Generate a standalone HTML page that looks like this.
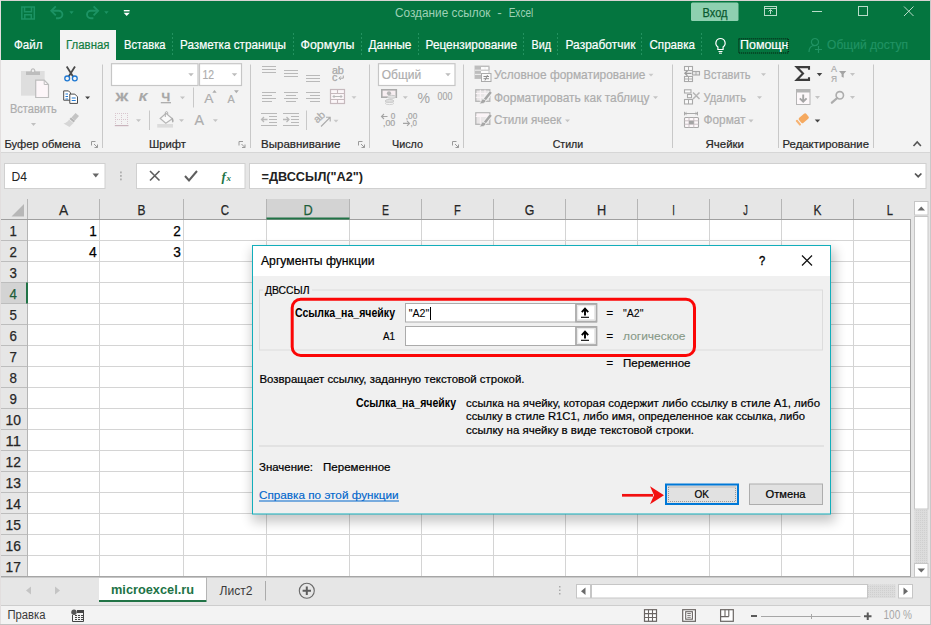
<!DOCTYPE html>
<html lang="ru"><head><meta charset="utf-8"><title>Создание ссылок - Excel</title>
<style>
html,body{margin:0;padding:0;background:#e6e6e6;overflow:hidden}
svg{display:block;font-family:'Liberation Sans', 'DejaVu Sans', sans-serif;}
text{white-space:pre}
</style></head><body>
<svg width="931" height="625" viewBox="0 0 931 625">
<defs><pattern id="hatch" width="2" height="2" patternUnits="userSpaceOnUse"><rect width="2" height="2" fill="#dcdcdc"/><rect width="1" height="1" fill="#cfcfcf"/></pattern><filter id="sh" x="-5%" y="-5%" width="110%" height="115%"><feGaussianBlur stdDeviation="6"/></filter></defs>
<rect x="0" y="0" width="931" height="625" fill="#e6e6e6" />
<rect x="0" y="0" width="931" height="60" fill="#04753f" />
<rect x="0" y="60" width="931" height="92" fill="#f3f3f3" />
<line x1="0" y1="152.5" x2="931" y2="152.5" stroke="#d6d6d6" stroke-width="1" />
<text x="395" y="17" font-size="12" fill="#9ed1b6" textLength="95.5" lengthAdjust="spacingAndGlyphs" >Создание ссылок</text>
<text x="497.3" y="17" font-size="12" fill="#9ed1b6" textLength="4.5" lengthAdjust="spacingAndGlyphs" >-</text>
<text x="508.7" y="17" font-size="12" fill="#9ed1b6" textLength="24.5" lengthAdjust="spacingAndGlyphs" >Excel</text>
<path d="M21.800 7h12.500v12h-12.500z M24.500 7v4.800h7v-4.800 M24.800 19v-4.200h6.500v4.200" fill="none" stroke="#1c9364" stroke-width="1.5" />
<path d="M52 10.800h6.700a3.700 3.700 0 0 1 0 7.400h-2.700" fill="none" stroke="#1c9364" stroke-width="1.9" />
<path d="M55.800 6.300l-4.500 4.500 4.500 4.500" fill="none" stroke="#1c9364" stroke-width="1.9" />
<path d="M69.300 11.200h4.400l-2.200 2.800z" fill="#1c9364" />
<path d="M97.400 10.800h-6.700a3.700 3.700 0 0 0 0 7.400h2.700" fill="none" stroke="#1c9364" stroke-width="1.9" />
<path d="M93.600 6.300l4.500 4.500-4.500 4.500" fill="none" stroke="#1c9364" stroke-width="1.9" />
<path d="M104.200 11.200h4.400l-2.200 2.800z" fill="#1c9364" />
<rect x="123.8" y="10" width="5.8" height="1.4" fill="#fff" />
<path d="M123.600 12.800h6.200l-3.100 3.300z" fill="#fff" />
<rect x="691" y="2.5" width="47.5" height="18.5" fill="#8ed0b0" rx="1.5" />
<text x="702.5" y="16.6" font-size="12" fill="#0a5a30" textLength="25" lengthAdjust="spacingAndGlyphs" stroke="#0a5a30" stroke-width="0.25" >Вход</text>
<rect x="764.5" y="6.5" width="12" height="9" fill="none" stroke="#b9dcc9" stroke-width="1" />
<line x1="764" y1="8.5" x2="777" y2="8.5" stroke="#b9dcc9" stroke-width="1" />
<path d="M770.5 14v-4 M768.5 11.5l2-2 2 2" fill="none" stroke="#b9dcc9" stroke-width="1" />
<line x1="812" y1="11.5" x2="822" y2="11.5" stroke="#b9dcc9" stroke-width="1" />
<rect x="858.5" y="6.5" width="9" height="9" fill="none" stroke="#b9dcc9" stroke-width="1" />
<path d="M904 6.5l9.500 9.500 M913.5 6.5l-9.500 9.500" fill="none" stroke="#b9dcc9" stroke-width="1" />
<rect x="60" y="30" width="56" height="30" fill="#f3f3f3" />
<text x="14" y="49" font-size="12.5" fill="#fff" textLength="28.5" lengthAdjust="spacingAndGlyphs" stroke="#fff" stroke-width="0.2" >Файл</text>
<text x="66" y="49" font-size="12.5" fill="#107c41" textLength="43.5" lengthAdjust="spacingAndGlyphs" stroke="#107c41" stroke-width="0.2" >Главная</text>
<text x="124" y="49" font-size="12.5" fill="#fff" textLength="41.5" lengthAdjust="spacingAndGlyphs" stroke="#fff" stroke-width="0.2" >Вставка</text>
<text x="180" y="49" font-size="12.5" fill="#fff" textLength="106" lengthAdjust="spacingAndGlyphs" stroke="#fff" stroke-width="0.2" >Разметка страницы</text>
<text x="300.5" y="49" font-size="12.5" fill="#fff" textLength="54" lengthAdjust="spacingAndGlyphs" stroke="#fff" stroke-width="0.2" >Формулы</text>
<text x="368.5" y="49" font-size="12.5" fill="#fff" textLength="43" lengthAdjust="spacingAndGlyphs" stroke="#fff" stroke-width="0.2" >Данные</text>
<text x="425.5" y="49" font-size="12.5" fill="#fff" textLength="91.5" lengthAdjust="spacingAndGlyphs" stroke="#fff" stroke-width="0.2" >Рецензирование</text>
<text x="531.5" y="49" font-size="12.5" fill="#fff" textLength="19.5" lengthAdjust="spacingAndGlyphs" stroke="#fff" stroke-width="0.2" >Вид</text>
<text x="565.5" y="49" font-size="12.5" fill="#fff" textLength="70" lengthAdjust="spacingAndGlyphs" stroke="#fff" stroke-width="0.2" >Разработчик</text>
<text x="649.5" y="49" font-size="12.5" fill="#fff" textLength="45.5" lengthAdjust="spacingAndGlyphs" stroke="#fff" stroke-width="0.2" >Справка</text>
<text x="740" y="49" font-size="12.5" fill="#fff" textLength="48.5" lengthAdjust="spacingAndGlyphs" stroke="#fff" stroke-width="0.2" >Помощн</text>
<text x="827" y="49" font-size="12.5" fill="#209363" textLength="81" lengthAdjust="spacingAndGlyphs" stroke="#209363" stroke-width="0.2" >Общий доступ</text>
<line x1="172.5" y1="33" x2="172.5" y2="56" stroke="#23925f" stroke-width="1" stroke-dasharray="2 2"/>
<line x1="293.5" y1="33" x2="293.5" y2="56" stroke="#23925f" stroke-width="1" stroke-dasharray="2 2"/>
<line x1="361.5" y1="33" x2="361.5" y2="56" stroke="#23925f" stroke-width="1" stroke-dasharray="2 2"/>
<line x1="418.5" y1="33" x2="418.5" y2="56" stroke="#23925f" stroke-width="1" stroke-dasharray="2 2"/>
<line x1="523.5" y1="33" x2="523.5" y2="56" stroke="#23925f" stroke-width="1" stroke-dasharray="2 2"/>
<line x1="557.5" y1="33" x2="557.5" y2="56" stroke="#23925f" stroke-width="1" stroke-dasharray="2 2"/>
<line x1="641.5" y1="33" x2="641.5" y2="56" stroke="#23925f" stroke-width="1" stroke-dasharray="2 2"/>
<line x1="701.5" y1="33" x2="701.5" y2="56" stroke="#23925f" stroke-width="1" stroke-dasharray="2 2"/>
<path d="M720.5 38.5a4.6 4.6 0 0 1 2.6 8.4v2.600h-5.2v-2.600a4.6 4.6 0 0 1 2.6-8.4z" fill="none" stroke="#fff" stroke-width="1.2" />
<line x1="718.5" y1="51.5" x2="722.5" y2="51.5" stroke="#fff" stroke-width="1" />
<line x1="719" y1="53.2" x2="722" y2="53.2" stroke="#fff" stroke-width="1" />
<rect x="738.7" y="38.7" width="49.6" height="14.3" fill="none" stroke="#06301a" stroke-width="1.5" stroke-dasharray="1 1"/>
<path d="M815 38.500a3.600 3.600 0 1 1 -0.100 0z M809 52c0-5 3-6.500 6-6.500" fill="none" stroke="#209363" stroke-width="1.2" />
<path d="M818.500 46v7 M815 49.500h7" fill="none" stroke="#209363" stroke-width="1.2" />
<line x1="102.5" y1="64.5" x2="102.5" y2="148" stroke="#c8c8c8" stroke-width="1" />
<line x1="250.5" y1="64.5" x2="250.5" y2="148" stroke="#c8c8c8" stroke-width="1" />
<line x1="369.5" y1="64.5" x2="369.5" y2="148" stroke="#c8c8c8" stroke-width="1" />
<line x1="463.5" y1="64.5" x2="463.5" y2="148" stroke="#c8c8c8" stroke-width="1" />
<line x1="672.5" y1="64.5" x2="672.5" y2="148" stroke="#c8c8c8" stroke-width="1" />
<line x1="778.5" y1="64.5" x2="778.5" y2="148" stroke="#c8c8c8" stroke-width="1" />
<line x1="873.5" y1="64.5" x2="873.5" y2="148" stroke="#c8c8c8" stroke-width="1" />
<rect x="21" y="71" width="23.7" height="24.7" fill="#dedede" />
<path d="M26 75v-3.500h4.500c0-4.500 5-4.500 5 0h4.500v3.500z" fill="#bdbdbd" />
<circle cx="33" cy="70.800" r="1.200" fill="#efefef"/>
<path d="M35.700 80.200h8.500l4.300 4.300v13h-12.800z" fill="#fdf6f9" stroke="#bdbdbd" stroke-width="1.2" />
<path d="M44.200 80.200v4.300h4.300" fill="none" stroke="#bdbdbd" stroke-width="1" />
<text x="9.9" y="112.8" font-size="12.3" fill="#adadad" textLength="47" lengthAdjust="spacingAndGlyphs" stroke="#adadad" stroke-width="0.2" >Вставить</text>
<path d="M31.0 123.1h5l-2.5 2.8z" fill="#c0c0c0" />
<path d="M66.700 66.500l6.300 10 M75 66.500l-6.300 10" fill="none" stroke="#4a4a4a" stroke-width="1.8" />
<circle cx="67.200" cy="78.400" r="2.400" fill="none" stroke="#1e78d2" stroke-width="1.300"/>
<circle cx="74.800" cy="78.400" r="2.400" fill="none" stroke="#1e78d2" stroke-width="1.300"/>
<path d="M63.700 90.900h4.800l2 2v7.300h-6.800z" fill="#fff" stroke="#4a4a4a" stroke-width="1" />
<path d="M69.800 94.100h5l2.700 2.700v6.600h-7.700z" fill="#fff" stroke="#4a4a4a" stroke-width="1" />
<path d="M65.500 94h2.500 M65.500 96.500h2.500 M65.500 99h2.500 M71.700 98h4 M71.700 100.500h4" fill="none" stroke="#1e78d2" stroke-width="1.1" />
<path d="M85.1 96.5h5l-2.5 2.8z" fill="#444" />
<path d="M75.500 113l3.500 3-4 4.500-3.500-3z" fill="#c4c4c4" />
<path d="M71 117.500l4 3.300-1.300 1.600-4.200-3.300z" fill="#b5b5b5" />
<path d="M69 119.500l4.500 3.600-4 4-6-3.600c2.500-0.500 4.500-2 5.500-4z" fill="#d6d6d6" />
<text x="4.5" y="147.5" font-size="11" fill="#262626" textLength="76" lengthAdjust="spacingAndGlyphs" stroke="#262626" stroke-width="0.2" >Буфер обмена</text>
<path d="M91.5 145.5v-4h4" fill="none" stroke="#9a9a9a" stroke-width="1" />
<path d="M94 144l3.500 3.500 M97.5 144.5v3h-3" fill="none" stroke="#9a9a9a" stroke-width="1" />
<rect x="111.5" y="63.7" width="86.5" height="21.8" fill="#fff" stroke="#c6c6c6" stroke-width="1.2" />
<path d="M188.25 73.3h5.5l-2.75 3.05z" fill="#bdbdbd" />
<rect x="199.5" y="63.7" width="42" height="21.8" fill="#fff" stroke="#c6c6c6" stroke-width="1.2" />
<text x="202.5" y="79" font-size="13" fill="#adadad" textLength="11.5" lengthAdjust="spacingAndGlyphs" stroke="#adadad" stroke-width="0.2" >12</text>
<path d="M231.75 73.3h5.5l-2.75 3.05z" fill="#bdbdbd" />
<text x="115.5" y="100.6" font-size="11.8" fill="#a6a6a6" textLength="12.8" lengthAdjust="spacingAndGlyphs" font-weight="bold" stroke="#a6a6a6" stroke-width="0.3" >Ж</text>
<text x="138.8" y="100.6" font-size="11.8" fill="#a6a6a6" textLength="8.6" lengthAdjust="spacingAndGlyphs" font-weight="bold" font-style="italic" stroke="#a6a6a6" stroke-width="0.2" >К</text>
<text x="161.4" y="100.6" font-size="11.8" fill="#a6a6a6" textLength="8.6" lengthAdjust="spacingAndGlyphs" font-weight="bold" stroke="#a6a6a6" stroke-width="0.3" >Ч</text>
<line x1="160.8" y1="102.7" x2="171" y2="102.7" stroke="#a6a6a6" stroke-width="1.2" />
<path d="M180.0 96.5h5l-2.5 2.8z" fill="#c4c4c4" />
<line x1="193.5" y1="87.5" x2="193.5" y2="107.5" stroke="#c8c8c8" stroke-width="1" />
<text x="204.2" y="102.8" font-size="13.3" fill="#adadad" textLength="9.2" lengthAdjust="spacingAndGlyphs" stroke="#adadad" stroke-width="0.2" >A</text>
<path d="M212.300 92.700l2.200-2.800 2.200 2.800z" fill="#adadad" />
<text x="227.5" y="102.8" font-size="10.6" fill="#adadad" textLength="7.2" lengthAdjust="spacingAndGlyphs" stroke="#adadad" stroke-width="0.2" >A</text>
<path d="M234 90.300l2.400 2.900 2.400-2.900z" fill="#adadad" />
<line x1="115" y1="113.5" x2="128.5" y2="113.5" stroke="#d9c6ce" stroke-width="1" stroke-dasharray="1 1"/>
<line x1="115" y1="119.5" x2="128.5" y2="119.5" stroke="#d9c6ce" stroke-width="1" stroke-dasharray="1 1"/>
<line x1="115.5" y1="113" x2="115.5" y2="125" stroke="#d9c6ce" stroke-width="1" stroke-dasharray="1 1"/>
<line x1="121.5" y1="113" x2="121.5" y2="125" stroke="#d9c6ce" stroke-width="1" stroke-dasharray="1 1"/>
<line x1="127.5" y1="113" x2="127.5" y2="125" stroke="#d9c6ce" stroke-width="1" stroke-dasharray="1 1"/>
<line x1="114.8" y1="125.6" x2="128.5" y2="125.6" stroke="#c9b4bc" stroke-width="1.2" />
<path d="M136.0 119.3h5l-2.5 2.8z" fill="#c4c4c4" />
<line x1="149.5" y1="110.5" x2="149.5" y2="130" stroke="#c8c8c8" stroke-width="1" />
<path d="M160.200 118.500l5.800-5.300 6.300 5.600-6.500 4.400z" fill="#fafafa" stroke="#b5b5b5" stroke-width="1.2" />
<path d="M165.300 117v-4.200c0-1.600 2.400-1.600 2.400 0v1.500" fill="none" stroke="#b0b0b0" stroke-width="1" />
<path d="M171.800 117.200c2.300 1.800 2.300 4.300 1 5.500-1.200-1.200-1-3-1-5.500z" fill="#ababab" />
<rect x="157.2" y="124" width="15.8" height="3.6" fill="#dcdcdc" />
<path d="M179.0 119.3h5l-2.5 2.8z" fill="#c4c4c4" />
<text x="194.5" y="124.6" font-size="14.8" fill="#adadad" textLength="9.5" lengthAdjust="spacingAndGlyphs" stroke="#adadad" stroke-width="0.2" >A</text>
<path d="M212.9 119.3h5l-2.5 2.8z" fill="#c4c4c4" />
<text x="149" y="147.5" font-size="11" fill="#262626" textLength="37" lengthAdjust="spacingAndGlyphs" stroke="#262626" stroke-width="0.2" >Шрифт</text>
<path d="M239.0 145.5v-4h4" fill="none" stroke="#9a9a9a" stroke-width="1" />
<path d="M241.5 144l3.500 3.500 M245.0 144.5v3h-3" fill="none" stroke="#9a9a9a" stroke-width="1" />
<line x1="262" y1="66.5" x2="276" y2="66.5" stroke="#b9b9b9" stroke-width="1" />
<line x1="262" y1="69.5" x2="276" y2="69.5" stroke="#b9b9b9" stroke-width="1" />
<line x1="262" y1="72.5" x2="276" y2="72.5" stroke="#b9b9b9" stroke-width="1" />
<line x1="284" y1="70.5" x2="298" y2="70.5" stroke="#b9b9b9" stroke-width="1" />
<line x1="284" y1="73.5" x2="298" y2="73.5" stroke="#b9b9b9" stroke-width="1" />
<line x1="284" y1="76.5" x2="298" y2="76.5" stroke="#b9b9b9" stroke-width="1" />
<line x1="306" y1="75.5" x2="320" y2="75.5" stroke="#b9b9b9" stroke-width="1" />
<line x1="306" y1="78.5" x2="320" y2="78.5" stroke="#b9b9b9" stroke-width="1" />
<line x1="306" y1="81.5" x2="320" y2="81.5" stroke="#b9b9b9" stroke-width="1" />
<text x="331.9" y="73.5" font-size="10.5" fill="#a8a8a8" textLength="11.9" lengthAdjust="spacingAndGlyphs" stroke="#a8a8a8" stroke-width="0.25" >ab</text>
<text x="331.9" y="80.7" font-size="10.5" fill="#a8a8a8" textLength="5.4" lengthAdjust="spacingAndGlyphs" stroke="#a8a8a8" stroke-width="0.25" >c</text>
<path d="M343.300 75.500v2.700h-4 M340.800 76.400l-1.800 1.800 1.800 1.800" fill="none" stroke="#a8a8a8" stroke-width="1" />
<line x1="262" y1="92.5" x2="276" y2="92.5" stroke="#b9b9b9" stroke-width="1" />
<line x1="262" y1="95.5" x2="272" y2="95.5" stroke="#b9b9b9" stroke-width="1" />
<line x1="262" y1="98.5" x2="276" y2="98.5" stroke="#b9b9b9" stroke-width="1" />
<line x1="262" y1="101.5" x2="272" y2="101.5" stroke="#b9b9b9" stroke-width="1" />
<line x1="284" y1="92.5" x2="298" y2="92.5" stroke="#b9b9b9" stroke-width="1" />
<line x1="286" y1="95.5" x2="296" y2="95.5" stroke="#b9b9b9" stroke-width="1" />
<line x1="284" y1="98.5" x2="298" y2="98.5" stroke="#b9b9b9" stroke-width="1" />
<line x1="286" y1="101.5" x2="296" y2="101.5" stroke="#b9b9b9" stroke-width="1" />
<line x1="306" y1="92.5" x2="320" y2="92.5" stroke="#b9b9b9" stroke-width="1" />
<line x1="310" y1="95.5" x2="320" y2="95.5" stroke="#b9b9b9" stroke-width="1" />
<line x1="306" y1="98.5" x2="320" y2="98.5" stroke="#b9b9b9" stroke-width="1" />
<line x1="310" y1="101.5" x2="320" y2="101.5" stroke="#b9b9b9" stroke-width="1" />
<rect x="330.5" y="89.5" width="14" height="14" fill="#fbf6f8" stroke="#c6b9bd" stroke-width="1.2" />
<path d="M330.500 93.500h14 M330.500 99.500h14 M337.500 89.500v4 M337.500 99.500v4" fill="none" stroke="#c6b9bd" stroke-width="1.1" />
<path d="M333 96.500h9 M334.500 95l-1.500 1.500 1.500 1.500 M340.500 95l1.500 1.500-1.500 1.500" fill="none" stroke="#b9b9b9" stroke-width="1" />
<path d="M351.5 96.3h5l-2.5 2.8z" fill="#c9c9c9" />
<line x1="261" y1="113.5" x2="277" y2="113.5" stroke="#b9b9b9" stroke-width="1" />
<line x1="261" y1="125.5" x2="277" y2="125.5" stroke="#b9b9b9" stroke-width="1" />
<line x1="269" y1="116.5" x2="277" y2="116.5" stroke="#b9b9b9" stroke-width="1" />
<line x1="269" y1="119.5" x2="277" y2="119.5" stroke="#b9b9b9" stroke-width="1" />
<line x1="269" y1="122.5" x2="277" y2="122.5" stroke="#b9b9b9" stroke-width="1" />
<path d="M261.500 119.500h6 M264 117l-2.500 2.500 2.500 2.500" fill="none" stroke="#b9b9b9" stroke-width="1.3" />
<line x1="283" y1="113.5" x2="299" y2="113.5" stroke="#b9b9b9" stroke-width="1" />
<line x1="283" y1="125.5" x2="299" y2="125.5" stroke="#b9b9b9" stroke-width="1" />
<line x1="291" y1="116.5" x2="299" y2="116.5" stroke="#b9b9b9" stroke-width="1" />
<line x1="291" y1="119.5" x2="299" y2="119.5" stroke="#b9b9b9" stroke-width="1" />
<line x1="291" y1="122.5" x2="299" y2="122.5" stroke="#b9b9b9" stroke-width="1" />
<path d="M283 119.500h6 M286.500 117l2.500 2.500-2.500 2.500" fill="none" stroke="#b9b9b9" stroke-width="1.3" />
<line x1="306.5" y1="110.5" x2="306.5" y2="130" stroke="#c8c8c8" stroke-width="1" />
<text x="0" y="0" font-size="10.500" fill="#adadad" transform="translate(317.2,123.6) rotate(-42)" stroke="#adadad" stroke-width="0.25">ab</text>
<path d="M321 126.500l9-9 M326 117.300h4.200v4.200" fill="none" stroke="#adadad" stroke-width="1.1" />
<path d="M333.5 119.8h5l-2.5 2.8z" fill="#c9c9c9" />
<text x="261" y="147.5" font-size="11" fill="#262626" textLength="79.5" lengthAdjust="spacingAndGlyphs" stroke="#262626" stroke-width="0.2" >Выравнивание</text>
<path d="M358.5 145.5v-4h4" fill="none" stroke="#9a9a9a" stroke-width="1" />
<path d="M361 144l3.500 3.500 M364.5 144.5v3h-3" fill="none" stroke="#9a9a9a" stroke-width="1" />
<rect x="378.5" y="63.7" width="76.5" height="21.8" fill="#fff" stroke="#c6c6c6" stroke-width="1.2" />
<text x="381.7" y="79" font-size="13" fill="#adadad" textLength="39.5" lengthAdjust="spacingAndGlyphs" stroke="#adadad" stroke-width="0.2" >Общий</text>
<path d="M445.25 73.3h5.5l-2.75 3.05z" fill="#bdbdbd" />
<rect x="381.8" y="89.8" width="14.5" height="7.4" fill="#f7eef1" stroke="#ababab" stroke-width="1.6" />
<circle cx="389" cy="93.300" r="2.100" fill="#b5b5b5"/>
<ellipse cx="391.500" cy="96.800" rx="4.300" ry="1.500" fill="#e2e2e2" stroke="#c9c9c9"/>
<ellipse cx="389.500" cy="101" rx="4.300" ry="1.500" fill="#e2e2e2" stroke="#c9c9c9"/>
<ellipse cx="389.500" cy="103.300" rx="4.300" ry="1.300" fill="none" stroke="#d2d2d2"/>
<path d="M402.8 96.3h5l-2.5 2.8z" fill="#c4c4c4" />
<text x="417.6" y="103" font-size="15.3" fill="#a4a4a4" textLength="12.5" lengthAdjust="spacingAndGlyphs" >%</text>
<text x="437.6" y="100.2" font-size="10.4" fill="#a4a4a4" textLength="14.7" lengthAdjust="spacingAndGlyphs" stroke="#a4a4a4" stroke-width="0.15" >000</text>
<text x="390.7" y="118.8" font-size="8.6" fill="#a4a4a4" textLength="4.5" lengthAdjust="spacingAndGlyphs" stroke="#a4a4a4" stroke-width="0.2" >0</text>
<text x="383" y="126" font-size="8.6" fill="#a4a4a4" textLength="12.2" lengthAdjust="spacingAndGlyphs" stroke="#a4a4a4" stroke-width="0.2" >,00</text>
<path d="M381.500 116.500h6 M384 114l-2.500 2.500 2.500 2.500" fill="none" stroke="#a4a4a4" stroke-width="1.1" />
<text x="405.8" y="118.8" font-size="8.6" fill="#a4a4a4" textLength="11.4" lengthAdjust="spacingAndGlyphs" stroke="#a4a4a4" stroke-width="0.2" >,00</text>
<text x="410.4" y="126" font-size="8.6" fill="#a4a4a4" textLength="6.6" lengthAdjust="spacingAndGlyphs" stroke="#a4a4a4" stroke-width="0.2" >,0</text>
<path d="M403 123.400h6.500 M407 120.900l2.500 2.500-2.500 2.500" fill="none" stroke="#a4a4a4" stroke-width="1.1" />
<text x="392" y="147.5" font-size="11" fill="#262626" textLength="31" lengthAdjust="spacingAndGlyphs" stroke="#262626" stroke-width="0.2" >Число</text>
<path d="M452.5 145.5v-4h4" fill="none" stroke="#9a9a9a" stroke-width="1" />
<path d="M455 144l3.500 3.500 M458.5 144.5v3h-3" fill="none" stroke="#9a9a9a" stroke-width="1" />
<rect x="475" y="66" width="14" height="12.5" fill="#fdfdfd" stroke="#c4c4c4" stroke-width="1" />
<rect x="475" y="66" width="6" height="12.5" fill="#bdbdbd" />
<path d="M475 70.200h14 M475 74.400h6 M485 66v4.200" fill="none" stroke="#f0f0f0" stroke-width="1" />
<path d="M481 66.500h8v3.700h-8" fill="none" stroke="#bdbdbd" stroke-width="1" />
<rect x="481.5" y="73.5" width="9.5" height="8" fill="#fafafa" stroke="#ababab" stroke-width="1" />
<path d="M483.500 76.500h5.500 M483.500 78.700h5.500 M487.500 75l-2.500 5.500" fill="none" stroke="#8f8f8f" stroke-width="1" />
<text x="494" y="78.8" font-size="12.4" fill="#adadad" textLength="151.5" lengthAdjust="spacingAndGlyphs" stroke="#adadad" stroke-width="0.2" >Условное форматирование</text>
<path d="M648.5 73.8h5l-2.5 2.8z" fill="#c9c9c9" />
<rect x="475.8" y="89.8" width="14" height="11.5" fill="#e9e6e7" stroke="#b5b5b5" stroke-width="1.3" />
<path d="M475.800 93.500h14 M475.800 97.300h14 M480.300 89.800v11.500 M485 89.800v11.500" fill="none" stroke="#fbf4f7" stroke-width="1" />
<path d="M490.800 92.0l-6.300 8" fill="none" stroke="#f3f3f3" stroke-width="4.4" />
<path d="M490.800 92.0l-6.300 8" fill="none" stroke="#a6a6a6" stroke-width="2.6" />
<path d="M485 99.5c1.500 1.800 0.300 4.500-5.800 4.300 1.800-1 1.500-3.800 3.500-4.700z" fill="#a6a6a6" stroke="#f3f3f3" stroke-width="0.7" />
<text x="494" y="101.8" font-size="12.4" fill="#adadad" textLength="155.5" lengthAdjust="spacingAndGlyphs" stroke="#adadad" stroke-width="0.2" >Форматировать как таблицу</text>
<path d="M653.0 96.3h5l-2.5 2.8z" fill="#c4c4c4" />
<rect x="475.8" y="112.8" width="14" height="11.5" fill="#e9e6e7" stroke="#b5b5b5" stroke-width="1.3" />
<path d="M475.800 116.500h14 M480.300 116.500v7.800" fill="none" stroke="#fbf4f7" stroke-width="1" />
<rect x="476.5" y="113.5" width="12.6" height="2.6" fill="#fbf4f7" />
<path d="M490.800 115.0l-6.300 8" fill="none" stroke="#f3f3f3" stroke-width="4.4" />
<path d="M490.800 115.0l-6.300 8" fill="none" stroke="#a6a6a6" stroke-width="2.6" />
<path d="M485 122.5c1.500 1.800 0.300 4.500-5.800 4.300 1.800-1 1.500-3.800 3.500-4.700z" fill="#a6a6a6" stroke="#f3f3f3" stroke-width="0.7" />
<text x="494" y="124.4" font-size="12.4" fill="#adadad" textLength="67.5" lengthAdjust="spacingAndGlyphs" stroke="#adadad" stroke-width="0.2" >Стили ячеек</text>
<path d="M565.0 119.39999999999999h5l-2.5 2.8z" fill="#c4c4c4" />
<text x="552.7" y="147.5" font-size="11" fill="#262626" textLength="30.5" lengthAdjust="spacingAndGlyphs" stroke="#262626" stroke-width="0.2" >Стили</text>
<rect x="684.5" y="66.5" width="8" height="4" fill="#fafafa" stroke="#a9a9a9" stroke-width="1.1" />
<line x1="688.5" y1="66.5" x2="688.5" y2="70.5" stroke="#a9a9a9" stroke-width="1" />
<rect x="684.5" y="76.5" width="8" height="5" fill="#fafafa" stroke="#a9a9a9" stroke-width="1.1" />
<path d="M688.500 76.500v5 M684.500 79h8" fill="none" stroke="#a9a9a9" stroke-width="1" />
<rect x="692.5" y="71.5" width="7" height="3.5" fill="#e9e9e9" stroke="#a9a9a9" stroke-width="1.1" />
<line x1="696" y1="71.5" x2="696" y2="75" stroke="#a9a9a9" stroke-width="1" />
<path d="M691.500 73.300h-6.500 M687.500 70.800l-2.600 2.500 2.600 2.500" fill="none" stroke="#9a9a9a" stroke-width="1.3" />
<text x="703.5" y="78.5" font-size="12.5" fill="#adadad" textLength="47" lengthAdjust="spacingAndGlyphs" stroke="#adadad" stroke-width="0.2" >Вставить</text>
<path d="M761.0 73.3h5l-2.5 2.8z" fill="#c4c4c4" />
<rect x="684.5" y="89.8" width="6.5" height="3.2" fill="#fafafa" stroke="#a9a9a9" stroke-width="1.1" />
<rect x="687.5" y="94.5" width="4" height="3.2" fill="#fafafa" stroke="#a9a9a9" stroke-width="1.1" />
<rect x="684.5" y="99.5" width="8" height="4.5" fill="#fafafa" stroke="#a9a9a9" stroke-width="1.1" />
<line x1="688.5" y1="99.5" x2="688.5" y2="104" stroke="#a9a9a9" stroke-width="1" />
<path d="M693 92.500l6.500 6.500 M699.500 92.500l-6.500 6.500" fill="none" stroke="#b5b5b5" stroke-width="1.5" />
<text x="703.5" y="101.7" font-size="12.5" fill="#adadad" textLength="42.5" lengthAdjust="spacingAndGlyphs" stroke="#adadad" stroke-width="0.2" >Удалить</text>
<path d="M757.0 96.3h5l-2.5 2.8z" fill="#c4c4c4" />
<path d="M684.500 113.500h13 M684.500 111.800v3.600 M697.500 111.800v3.600 M686.500 112.300l-1.500 1.200 1.500 1.200 M695.500 112.300l1.500 1.200-1.500 1.200" fill="none" stroke="#a9a9a9" stroke-width="1" />
<rect x="684.5" y="117.5" width="14" height="10" fill="#fdf8fa" stroke="#a9a9a9" stroke-width="1.1" rx="1" />
<path d="M684.500 120.800h14 M684.500 124.200h14 M689 117.500v10 M693.800 117.500v10" fill="none" stroke="#c9c0c4" stroke-width="1" />
<rect x="689" y="120.8" width="4.8" height="3.4" fill="#a4a4a4" />
<text x="703.5" y="124.3" font-size="12.5" fill="#adadad" textLength="42" lengthAdjust="spacingAndGlyphs" stroke="#adadad" stroke-width="0.2" >Формат</text>
<path d="M748.5 119.6h5l-2.5 2.8z" fill="#c4c4c4" />
<text x="705.5" y="147.5" font-size="11" fill="#262626" textLength="38.5" lengthAdjust="spacingAndGlyphs" stroke="#262626" stroke-width="0.2" >Ячейки</text>
<path d="M809 69.800v-2.700h-12.300l6.300 6.400-6.300 6.400h12.300v-2.700" fill="none" stroke="#3b3b3b" stroke-width="2.1" stroke-linejoin="miter"/>
<path d="M816.75 73.1h5.5l-2.75 3.05z" fill="#444" />
<text x="831" y="72.4" font-size="8.6" fill="#ababab" textLength="6" lengthAdjust="spacingAndGlyphs" stroke="#ababab" stroke-width="0.2" >А</text>
<text x="831" y="81.9" font-size="8.6" fill="#ababab" textLength="6" lengthAdjust="spacingAndGlyphs" stroke="#ababab" stroke-width="0.2" >Я</text>
<path d="M839 71h7.300l-2.600 3v3.700l-2.100 -1v-2.700z" fill="#a4a4a4" />
<path d="M850.0 73.1h5l-2.5 2.8z" fill="#c4c4c4" />
<rect x="796.5" y="89.5" width="13.5" height="15" fill="#fdf8fa" stroke="#b5b5b5" stroke-width="1" />
<rect x="796.5" y="89.5" width="13.5" height="3" fill="#b5b5b5" />
<path d="M803.200 94.500v7 M799.800 98.300l3.400 3.400 3.400-3.400" fill="none" stroke="#a4a4a4" stroke-width="1.9" />
<path d="M815.0 96.1h5l-2.5 2.8z" fill="#c4c4c4" />
<circle cx="839.800" cy="95.300" r="3.700" fill="none" stroke="#adadad" stroke-width="1.600"/>
<path d="M837.200 98l-5.300 4.700" fill="none" stroke="#adadad" stroke-width="2.3" stroke-linecap="round"/>
<path d="M850.0 96.1h5l-2.5 2.8z" fill="#c4c4c4" />
<g transform="translate(802.6,119.2) rotate(-40)"><rect x="-3.300" y="-3.300" width="9.600" height="6.600" rx="1.700" fill="#f5a95f"/><rect x="-6.500" y="-3.300" width="2.100" height="6.600" rx="0.800" fill="#f7b373"/></g>
<path d="M814.75 119.39999999999999h5.5l-2.75 3.05z" fill="#444" />
<text x="782.5" y="147.5" font-size="11" fill="#262626" textLength="86.5" lengthAdjust="spacingAndGlyphs" stroke="#262626" stroke-width="0.2" >Редактирование</text>
<path d="M913.500 146l3.700-4 3.700 4" fill="none" stroke="#555" stroke-width="1.6" />
<rect x="4.5" y="163.5" width="100.5" height="25" fill="#fff" stroke="#d0d0d0" stroke-width="1" />
<text x="11.5" y="180.5" font-size="12.5" fill="#222" textLength="15.5" lengthAdjust="spacingAndGlyphs" >D4</text>
<path d="M92.500 173.500h6.500l-3.250 4z" fill="#666" />
<rect x="120" y="171.5" width="1.8" height="1.8" fill="#b0b0b0" />
<rect x="120" y="175" width="1.8" height="1.8" fill="#b0b0b0" />
<rect x="120" y="178.5" width="1.8" height="1.8" fill="#b0b0b0" />
<rect x="136.5" y="163.5" width="108.5" height="25" fill="#fff" stroke="#d0d0d0" stroke-width="1" />
<path d="M150 171l9.500 9.500 M159.500 171l-9.500 9.500" fill="none" stroke="#5e5e5e" stroke-width="1.6" />
<path d="M185 176l4 4.500 8-9.500" fill="none" stroke="#5e5e5e" stroke-width="2" />
<text x="221.5" y="180.5" font-size="13" fill="#217346" font-weight="bold" font-style="italic" font-family='"Liberation Serif", serif'>f</text>
<text x="226.5" y="181" font-size="9" fill="#217346" font-weight="bold" font-style="italic" font-family='"Liberation Serif", serif'>x</text>
<rect x="249.5" y="163.5" width="676.5" height="25" fill="#fff" stroke="#d0d0d0" stroke-width="1" />
<text x="261.5" y="181.3" font-size="13" fill="#222" textLength="101.5" lengthAdjust="spacingAndGlyphs" font-weight="bold" >=ДВССЫЛ(&quot;A2&quot;)</text>
<path d="M915 173.500l3.200 3.200 3.200-3.200" fill="none" stroke="#555" stroke-width="1.7" />
<rect x="0" y="199" width="911" height="21" fill="#e6e6e6" />
<rect x="27.5" y="219.5" width="883.5" height="357.5" fill="#fff" />
<rect x="266.5" y="199" width="83" height="20" fill="#d3d3d3" />
<rect x="0" y="282.5" width="27" height="21" fill="#d3d3d3" />
<path d="M11.500 216.500h12.500v-12.500z" fill="#b7b7b7" />
<line x1="27.5" y1="240.5" x2="911" y2="240.5" stroke="#d4d4d4" stroke-width="1" />
<line x1="0" y1="240.5" x2="27" y2="240.5" stroke="#bdbdbd" stroke-width="1" />
<line x1="27.5" y1="261.5" x2="911" y2="261.5" stroke="#d4d4d4" stroke-width="1" />
<line x1="0" y1="261.5" x2="27" y2="261.5" stroke="#bdbdbd" stroke-width="1" />
<line x1="27.5" y1="282.5" x2="911" y2="282.5" stroke="#d4d4d4" stroke-width="1" />
<line x1="0" y1="282.5" x2="27" y2="282.5" stroke="#bdbdbd" stroke-width="1" />
<line x1="27.5" y1="303.5" x2="911" y2="303.5" stroke="#d4d4d4" stroke-width="1" />
<line x1="0" y1="303.5" x2="27" y2="303.5" stroke="#bdbdbd" stroke-width="1" />
<line x1="27.5" y1="324.5" x2="911" y2="324.5" stroke="#d4d4d4" stroke-width="1" />
<line x1="0" y1="324.5" x2="27" y2="324.5" stroke="#bdbdbd" stroke-width="1" />
<line x1="27.5" y1="345.5" x2="911" y2="345.5" stroke="#d4d4d4" stroke-width="1" />
<line x1="0" y1="345.5" x2="27" y2="345.5" stroke="#bdbdbd" stroke-width="1" />
<line x1="27.5" y1="366.5" x2="911" y2="366.5" stroke="#d4d4d4" stroke-width="1" />
<line x1="0" y1="366.5" x2="27" y2="366.5" stroke="#bdbdbd" stroke-width="1" />
<line x1="27.5" y1="387.5" x2="911" y2="387.5" stroke="#d4d4d4" stroke-width="1" />
<line x1="0" y1="387.5" x2="27" y2="387.5" stroke="#bdbdbd" stroke-width="1" />
<line x1="27.5" y1="408.5" x2="911" y2="408.5" stroke="#d4d4d4" stroke-width="1" />
<line x1="0" y1="408.5" x2="27" y2="408.5" stroke="#bdbdbd" stroke-width="1" />
<line x1="27.5" y1="429.5" x2="911" y2="429.5" stroke="#d4d4d4" stroke-width="1" />
<line x1="0" y1="429.5" x2="27" y2="429.5" stroke="#bdbdbd" stroke-width="1" />
<line x1="27.5" y1="450.5" x2="911" y2="450.5" stroke="#d4d4d4" stroke-width="1" />
<line x1="0" y1="450.5" x2="27" y2="450.5" stroke="#bdbdbd" stroke-width="1" />
<line x1="27.5" y1="471.5" x2="911" y2="471.5" stroke="#d4d4d4" stroke-width="1" />
<line x1="0" y1="471.5" x2="27" y2="471.5" stroke="#bdbdbd" stroke-width="1" />
<line x1="27.5" y1="492.5" x2="911" y2="492.5" stroke="#d4d4d4" stroke-width="1" />
<line x1="0" y1="492.5" x2="27" y2="492.5" stroke="#bdbdbd" stroke-width="1" />
<line x1="27.5" y1="513.5" x2="911" y2="513.5" stroke="#d4d4d4" stroke-width="1" />
<line x1="0" y1="513.5" x2="27" y2="513.5" stroke="#bdbdbd" stroke-width="1" />
<line x1="27.5" y1="534.5" x2="911" y2="534.5" stroke="#d4d4d4" stroke-width="1" />
<line x1="0" y1="534.5" x2="27" y2="534.5" stroke="#bdbdbd" stroke-width="1" />
<line x1="27.5" y1="555.5" x2="911" y2="555.5" stroke="#d4d4d4" stroke-width="1" />
<line x1="0" y1="555.5" x2="27" y2="555.5" stroke="#bdbdbd" stroke-width="1" />
<line x1="27.5" y1="576.5" x2="911" y2="576.5" stroke="#d4d4d4" stroke-width="1" />
<line x1="0" y1="576.5" x2="27" y2="576.5" stroke="#bdbdbd" stroke-width="1" />
<line x1="99.5" y1="219.5" x2="99.5" y2="577" stroke="#d4d4d4" stroke-width="1" />
<line x1="99.5" y1="199" x2="99.5" y2="219" stroke="#b5b5b5" stroke-width="1" />
<line x1="183.5" y1="219.5" x2="183.5" y2="577" stroke="#d4d4d4" stroke-width="1" />
<line x1="183.5" y1="199" x2="183.5" y2="219" stroke="#b5b5b5" stroke-width="1" />
<line x1="266.5" y1="219.5" x2="266.5" y2="577" stroke="#d4d4d4" stroke-width="1" />
<line x1="266.5" y1="199" x2="266.5" y2="219" stroke="#b5b5b5" stroke-width="1" />
<line x1="349.5" y1="219.5" x2="349.5" y2="577" stroke="#d4d4d4" stroke-width="1" />
<line x1="349.5" y1="199" x2="349.5" y2="219" stroke="#b5b5b5" stroke-width="1" />
<line x1="421.5" y1="219.5" x2="421.5" y2="577" stroke="#d4d4d4" stroke-width="1" />
<line x1="421.5" y1="199" x2="421.5" y2="219" stroke="#b5b5b5" stroke-width="1" />
<line x1="493.5" y1="219.5" x2="493.5" y2="577" stroke="#d4d4d4" stroke-width="1" />
<line x1="493.5" y1="199" x2="493.5" y2="219" stroke="#b5b5b5" stroke-width="1" />
<line x1="565.5" y1="219.5" x2="565.5" y2="577" stroke="#d4d4d4" stroke-width="1" />
<line x1="565.5" y1="199" x2="565.5" y2="219" stroke="#b5b5b5" stroke-width="1" />
<line x1="637.5" y1="219.5" x2="637.5" y2="577" stroke="#d4d4d4" stroke-width="1" />
<line x1="637.5" y1="199" x2="637.5" y2="219" stroke="#b5b5b5" stroke-width="1" />
<line x1="709.5" y1="219.5" x2="709.5" y2="577" stroke="#d4d4d4" stroke-width="1" />
<line x1="709.5" y1="199" x2="709.5" y2="219" stroke="#b5b5b5" stroke-width="1" />
<line x1="781.5" y1="219.5" x2="781.5" y2="577" stroke="#d4d4d4" stroke-width="1" />
<line x1="781.5" y1="199" x2="781.5" y2="219" stroke="#b5b5b5" stroke-width="1" />
<line x1="853.5" y1="219.5" x2="853.5" y2="577" stroke="#d4d4d4" stroke-width="1" />
<line x1="853.5" y1="199" x2="853.5" y2="219" stroke="#b5b5b5" stroke-width="1" />
<line x1="27.5" y1="199" x2="27.5" y2="577" stroke="#b5b5b5" stroke-width="1" />
<line x1="0" y1="219.5" x2="911" y2="219.5" stroke="#9f9f9f" stroke-width="1" />
<line x1="910.5" y1="219.5" x2="910.5" y2="577" stroke="#a6a6a6" stroke-width="1" />
<line x1="0" y1="576.5" x2="911" y2="576.5" stroke="#a6a6a6" stroke-width="1" />
<line x1="266.5" y1="218.5" x2="349.5" y2="218.5" stroke="#217346" stroke-width="2" />
<line x1="27" y1="282.5" x2="27" y2="303.5" stroke="#217346" stroke-width="2" />
<text x="58.9" y="214.8" font-size="14.8" fill="#262626" textLength="9.2" lengthAdjust="spacingAndGlyphs" stroke="#262626" stroke-width="0.25" >A</text>
<text x="137.5" y="214.8" font-size="14.8" fill="#262626" textLength="8" lengthAdjust="spacingAndGlyphs" stroke="#262626" stroke-width="0.25" >B</text>
<text x="220.85" y="214.8" font-size="14.8" fill="#262626" textLength="8.3" lengthAdjust="spacingAndGlyphs" stroke="#262626" stroke-width="0.25" >C</text>
<text x="303.4" y="214.8" font-size="14.8" fill="#1e5e3a" textLength="9.2" lengthAdjust="spacingAndGlyphs" stroke="#1e5e3a" stroke-width="0.25" >D</text>
<text x="382.0" y="214.8" font-size="14.8" fill="#262626" textLength="7" lengthAdjust="spacingAndGlyphs" stroke="#262626" stroke-width="0.25" >E</text>
<text x="454.1" y="214.8" font-size="14.8" fill="#262626" textLength="6.8" lengthAdjust="spacingAndGlyphs" stroke="#262626" stroke-width="0.25" >F</text>
<text x="524.7" y="214.8" font-size="14.8" fill="#262626" textLength="9.6" lengthAdjust="spacingAndGlyphs" stroke="#262626" stroke-width="0.25" >G</text>
<text x="596.9" y="214.8" font-size="14.8" fill="#262626" textLength="9.2" lengthAdjust="spacingAndGlyphs" stroke="#262626" stroke-width="0.25" >H</text>
<text x="672.2" y="214.8" font-size="14.8" fill="#262626" textLength="2.6" lengthAdjust="spacingAndGlyphs" stroke="#262626" stroke-width="0.25" >I</text>
<text x="743.2" y="214.8" font-size="14.8" fill="#262626" textLength="4.6" lengthAdjust="spacingAndGlyphs" stroke="#262626" stroke-width="0.25" >J</text>
<text x="813.5" y="214.8" font-size="14.8" fill="#262626" textLength="8" lengthAdjust="spacingAndGlyphs" stroke="#262626" stroke-width="0.25" >K</text>
<text x="886.85" y="214.8" font-size="14.8" fill="#262626" textLength="6.3" lengthAdjust="spacingAndGlyphs" stroke="#262626" stroke-width="0.25" >L</text>
<text x="9.600000000000001" y="236.3" font-size="15" fill="#262626" textLength="7.4" lengthAdjust="spacingAndGlyphs" stroke="#262626" stroke-width="0.25" >1</text>
<text x="9.600000000000001" y="257.3" font-size="15" fill="#262626" textLength="7.4" lengthAdjust="spacingAndGlyphs" stroke="#262626" stroke-width="0.25" >2</text>
<text x="9.600000000000001" y="278.3" font-size="15" fill="#262626" textLength="7.4" lengthAdjust="spacingAndGlyphs" stroke="#262626" stroke-width="0.25" >3</text>
<text x="9.600000000000001" y="299.3" font-size="15" fill="#1e5e3a" textLength="7.4" lengthAdjust="spacingAndGlyphs" stroke="#1e5e3a" stroke-width="0.25" >4</text>
<text x="9.600000000000001" y="320.3" font-size="15" fill="#262626" textLength="7.4" lengthAdjust="spacingAndGlyphs" stroke="#262626" stroke-width="0.25" >5</text>
<text x="9.600000000000001" y="341.3" font-size="15" fill="#262626" textLength="7.4" lengthAdjust="spacingAndGlyphs" stroke="#262626" stroke-width="0.25" >6</text>
<text x="9.600000000000001" y="362.3" font-size="15" fill="#262626" textLength="7.4" lengthAdjust="spacingAndGlyphs" stroke="#262626" stroke-width="0.25" >7</text>
<text x="9.600000000000001" y="383.3" font-size="15" fill="#262626" textLength="7.4" lengthAdjust="spacingAndGlyphs" stroke="#262626" stroke-width="0.25" >8</text>
<text x="9.600000000000001" y="404.3" font-size="15" fill="#262626" textLength="7.4" lengthAdjust="spacingAndGlyphs" stroke="#262626" stroke-width="0.25" >9</text>
<text x="5.6000000000000005" y="425.3" font-size="15" fill="#262626" textLength="15.4" lengthAdjust="spacingAndGlyphs" stroke="#262626" stroke-width="0.25" >10</text>
<text x="5.6000000000000005" y="446.3" font-size="15" fill="#262626" textLength="15.4" lengthAdjust="spacingAndGlyphs" stroke="#262626" stroke-width="0.25" >11</text>
<text x="5.6000000000000005" y="467.3" font-size="15" fill="#262626" textLength="15.4" lengthAdjust="spacingAndGlyphs" stroke="#262626" stroke-width="0.25" >12</text>
<text x="5.6000000000000005" y="488.3" font-size="15" fill="#262626" textLength="15.4" lengthAdjust="spacingAndGlyphs" stroke="#262626" stroke-width="0.25" >13</text>
<text x="5.6000000000000005" y="509.3" font-size="15" fill="#262626" textLength="15.4" lengthAdjust="spacingAndGlyphs" stroke="#262626" stroke-width="0.25" >14</text>
<text x="5.6000000000000005" y="530.3" font-size="15" fill="#262626" textLength="15.4" lengthAdjust="spacingAndGlyphs" stroke="#262626" stroke-width="0.25" >15</text>
<text x="5.6000000000000005" y="551.3" font-size="15" fill="#262626" textLength="15.4" lengthAdjust="spacingAndGlyphs" stroke="#262626" stroke-width="0.25" >16</text>
<text x="5.6000000000000005" y="572.3" font-size="15" fill="#262626" textLength="15.4" lengthAdjust="spacingAndGlyphs" stroke="#262626" stroke-width="0.25" >17</text>
<text x="89.2" y="236.2" font-size="15" fill="#000" textLength="7.6" lengthAdjust="spacingAndGlyphs" stroke="#000" stroke-width="0.25" >1</text>
<text x="173.20000000000002" y="236.2" font-size="15" fill="#000" textLength="7.6" lengthAdjust="spacingAndGlyphs" stroke="#000" stroke-width="0.25" >2</text>
<text x="89.0" y="257.2" font-size="15" fill="#000" textLength="7.8" lengthAdjust="spacingAndGlyphs" stroke="#000" stroke-width="0.25" >4</text>
<text x="173.20000000000002" y="257.2" font-size="15" fill="#000" textLength="7.6" lengthAdjust="spacingAndGlyphs" stroke="#000" stroke-width="0.25" >3</text>
<rect x="914.5" y="201.5" width="13.5" height="13.5" fill="#fff" stroke="#c6c6c6" stroke-width="1" />
<path d="M917.500 210.500l3.750-4 3.750 4z" fill="#6a6a6a" />
<rect x="914.5" y="216.5" width="13.5" height="292.5" fill="#fff" stroke="#c6c6c6" stroke-width="1" />
<rect x="914.5" y="510" width="13.5" height="53" fill="url(#hatch)" />
<rect x="914.5" y="563.5" width="13.5" height="13.5" fill="#fff" stroke="#c6c6c6" stroke-width="1" />
<path d="M917.500 568.500l3.750 4 3.750-4z" fill="#6a6a6a" />
<line x1="0" y1="577.5" x2="931" y2="577.5" stroke="#c9c9c9" stroke-width="1" />
<rect x="99" y="577.5" width="107.5" height="22.5" fill="#fff" />
<rect x="99" y="600" width="107.5" height="2" fill="#217346" />
<line x1="206.5" y1="577.5" x2="206.5" y2="600" stroke="#b5b5b5" stroke-width="1" />
<line x1="99" y1="577" x2="207" y2="577" stroke="#a6a6a6" stroke-width="1" />
<text x="111" y="594" font-size="13" fill="#217346" textLength="83" lengthAdjust="spacingAndGlyphs" font-weight="bold" >microexcel.ru</text>
<text x="219.5" y="594.5" font-size="13" fill="#3a3a3a" textLength="33" lengthAdjust="spacingAndGlyphs" >Лист2</text>
<line x1="265.5" y1="581" x2="265.5" y2="600.5" stroke="#ababab" stroke-width="1" />
<path d="M31 586.500v8l-5-4z" fill="#c4c4c4" />
<path d="M55 586.500v8l5-4z" fill="#c4c4c4" />
<circle cx="306.800" cy="590.800" r="7.500" fill="none" stroke="#6a6a6a" stroke-width="1.100"/>
<path d="M302.600 590.800h8.400 M306.800 586.600v8.400" fill="none" stroke="#5e5e5e" stroke-width="2" />
<rect x="559" y="586" width="1.5" height="1.5" fill="#a9a9a9" />
<rect x="559" y="589.5" width="1.5" height="1.5" fill="#a9a9a9" />
<rect x="559" y="593" width="1.5" height="1.5" fill="#a9a9a9" />
<rect x="576.5" y="584.5" width="14" height="13.5" fill="#fff" stroke="#c6c6c6" stroke-width="1" />
<path d="M585.500 587.500v7.500l-4.500-3.750z" fill="#6a6a6a" />
<rect x="591.5" y="584.5" width="276" height="13.5" fill="#fff" stroke="#c6c6c6" stroke-width="1" />
<rect x="868" y="584.5" width="27.5" height="13.5" fill="url(#hatch)" />
<rect x="898.5" y="584.5" width="14" height="13.5" fill="#fff" stroke="#c6c6c6" stroke-width="1" />
<path d="M903.500 587.500v7.500l4.500-3.750z" fill="#6a6a6a" />
<rect x="0" y="606" width="931" height="19" fill="#f3f3f3" />
<line x1="0" y1="605.5" x2="931" y2="605.5" stroke="#cdcdcd" stroke-width="1" />
<text x="7.5" y="619" font-size="12" fill="#3a3a3a" textLength="38" lengthAdjust="spacingAndGlyphs" >Правка</text>
<path d="M72.500 615v6.500h11v-11h-6" fill="none" stroke="#444" stroke-width="1" />
<rect x="77" y="610" width="7" height="3" fill="#444" />
<rect x="75" y="615.0" width="2" height="1" fill="#444" />
<rect x="78" y="615.0" width="2" height="1" fill="#444" />
<rect x="81" y="615.0" width="2" height="1" fill="#444" />
<rect x="75" y="617.0" width="2" height="1" fill="#444" />
<rect x="78" y="617.0" width="2" height="1" fill="#444" />
<rect x="81" y="617.0" width="2" height="1" fill="#444" />
<rect x="75" y="619.0" width="2" height="1" fill="#444" />
<rect x="78" y="619.0" width="2" height="1" fill="#444" />
<rect x="81" y="619.0" width="2" height="1" fill="#444" />
<circle cx="74" cy="612.200" r="2.700" fill="#555"/>
<rect x="644.5" y="609.7" width="12" height="11.6" fill="#fff" stroke="#6a6563" stroke-width="1.2" />
<path d="M648.500 609.700v11.600 M652.500 609.700v11.600 M644.500 613.600h12 M644.500 617.500h12" fill="none" stroke="#6a6563" stroke-width="1.1" />
<rect x="682.7" y="609.7" width="12.7" height="11.6" fill="#fff" stroke="#6a6563" stroke-width="1.2" />
<rect x="685.7" y="611.7" width="6.7" height="7.5" fill="none" stroke="#6a6563" stroke-width="1.1" />
<path d="M687.300 613.500h3.500 M687.300 615.400h3.500 M687.300 617.300h3.500" fill="none" stroke="#6a6563" stroke-width="0.9" />
<rect x="720.6" y="609.7" width="12.7" height="11.6" fill="#fff" stroke="#6a6563" stroke-width="1.2" />
<path d="M725 609.700v6.900 M728.800 609.700v6.900 M720.600 616.600h8.200" fill="none" stroke="#6a6563" stroke-width="1.1" />
<rect x="751" y="615" width="6" height="2" fill="#5a5a5a" />
<line x1="761" y1="616.5" x2="860.5" y2="616.5" stroke="#a6a6a6" stroke-width="1" />
<line x1="811.5" y1="614" x2="811.5" y2="619" stroke="#a6a6a6" stroke-width="1" />
<path d="M864 616.200h7.500 M867.750 612.500v7.500" fill="none" stroke="#5a5a5a" stroke-width="2" />
<text x="883.5" y="619" font-size="12" fill="#a6a6a6" textLength="28.5" lengthAdjust="spacingAndGlyphs" >100 %</text>
<rect x="252" y="249" width="583" height="273" fill="#000" opacity="0.22" filter="url(#sh)"/>
<rect x="252.5" y="245.5" width="578" height="268.5" fill="#f0f0f0" stroke="#12aebb" stroke-width="1" />
<rect x="253" y="246" width="577" height="30" fill="#fff" />
<text x="261" y="264.8" font-size="12" fill="#000" textLength="113.5" lengthAdjust="spacingAndGlyphs" stroke="#000" stroke-width="0.22" >Аргументы функции</text>
<text x="759" y="265" font-size="13.5" fill="#000" textLength="6.2" lengthAdjust="spacingAndGlyphs" stroke="#000" stroke-width="0.45" >?</text>
<path d="M802 255.500l10 10 M812 255.500l-10 10" fill="none" stroke="#111" stroke-width="1.2" />
<rect x="259.5" y="290" width="563" height="60" fill="none" stroke="#dcdcdc" stroke-width="1" />
<rect x="263" y="284" width="49" height="12" fill="#f0f0f0" />
<text x="265" y="294.3" font-size="11.5" fill="#000" textLength="44.5" lengthAdjust="spacingAndGlyphs" stroke="#000" stroke-width="0.22" >ДВССЫЛ</text>
<rect x="405.5" y="303.5" width="191" height="18.5" fill="#fff" stroke="#ababab" stroke-width="1" />
<rect x="576" y="304.0" width="20.5" height="17.5" fill="#fff" stroke="#ababab" stroke-width="1.8" />
<rect x="577.7" y="305.7" width="17" height="14.1" fill="none" stroke="#e3e3e3" stroke-width="1" />
<path d="M585 315.5v-6.500 M581.800 312.1l3.200-3.400 3.200 3.400" fill="none" stroke="#000" stroke-width="1.9" />
<line x1="581" y1="317.3" x2="589" y2="317.3" stroke="#000" stroke-width="1.1" />
<rect x="405.5" y="326.5" width="191" height="19" fill="#fff" stroke="#ababab" stroke-width="1" />
<rect x="576" y="327.0" width="20.5" height="18" fill="#fff" stroke="#ababab" stroke-width="1.8" />
<rect x="577.7" y="328.7" width="17" height="14.6" fill="none" stroke="#e3e3e3" stroke-width="1" />
<path d="M585 338.5v-6.500 M581.800 335.1l3.200-3.400 3.200 3.400" fill="none" stroke="#000" stroke-width="1.9" />
<line x1="581" y1="340.3" x2="589" y2="340.3" stroke="#000" stroke-width="1.1" />
<text x="295" y="317.3" font-size="12" fill="#000" textLength="100" lengthAdjust="spacingAndGlyphs" font-weight="bold" >Ссылка_на_ячейку</text>
<text x="408.7" y="317.3" font-size="11.5" fill="#000" textLength="20.5" lengthAdjust="spacingAndGlyphs" stroke="#000" stroke-width="0.08" >&quot;A2&quot;</text>
<line x1="430.5" y1="307" x2="430.5" y2="320" stroke="#000" stroke-width="1" />
<text x="383" y="340.3" font-size="11.5" fill="#000" textLength="12" lengthAdjust="spacingAndGlyphs" stroke="#000" stroke-width="0.22" >A1</text>
<text x="606.5" y="317.3" font-size="11.5" fill="#000" textLength="6.5" lengthAdjust="spacingAndGlyphs" stroke="#000" stroke-width="0.4" >=</text>
<text x="623" y="317.3" font-size="11.5" fill="#000" textLength="20.5" lengthAdjust="spacingAndGlyphs" stroke="#000" stroke-width="0.08" >&quot;A2&quot;</text>
<text x="606.5" y="340.3" font-size="11.5" fill="#000" textLength="6.5" lengthAdjust="spacingAndGlyphs" stroke="#000" stroke-width="0.4" >=</text>
<text x="623" y="340.3" font-size="11.5" fill="#879987" textLength="62.5" lengthAdjust="spacingAndGlyphs" stroke="#879987" stroke-width="0.1" >логическое</text>
<text x="606.5" y="367.3" font-size="11.5" fill="#000" textLength="6.5" lengthAdjust="spacingAndGlyphs" stroke="#000" stroke-width="0.4" >=</text>
<text x="623" y="367.3" font-size="11.5" fill="#000" textLength="67.5" lengthAdjust="spacingAndGlyphs" stroke="#000" stroke-width="0.22" >Переменное</text>
<rect x="292.2" y="299.2" width="402.3" height="56.3" fill="none" stroke="#fb0606" stroke-width="3" rx="8.5" />
<text x="259.5" y="383" font-size="11.5" fill="#000" textLength="265" lengthAdjust="spacingAndGlyphs" stroke="#000" stroke-width="0.22" >Возвращает ссылку, заданную текстовой строкой.</text>
<text x="356" y="406.6" font-size="12" fill="#000" textLength="100" lengthAdjust="spacingAndGlyphs" font-weight="bold" >Ссылка_на_ячейку</text>
<text x="466" y="406.6" font-size="11.5" fill="#000" textLength="354" lengthAdjust="spacingAndGlyphs" stroke="#000" stroke-width="0.22" >ссылка на ячейку, которая содержит либо ссылку в стиле A1, либо</text>
<text x="466" y="420.1" font-size="11.5" fill="#000" textLength="339" lengthAdjust="spacingAndGlyphs" stroke="#000" stroke-width="0.22" >ссылку в стиле R1C1, либо имя, определенное как ссылка, либо</text>
<text x="466" y="433.6" font-size="11.5" fill="#000" textLength="228" lengthAdjust="spacingAndGlyphs" stroke="#000" stroke-width="0.22" >ссылку на ячейку в виде текстовой строки.</text>
<line x1="259" y1="446" x2="824" y2="446" stroke="#d4d4d4" stroke-width="1" />
<text x="259" y="470.5" font-size="11.5" fill="#000" textLength="54" lengthAdjust="spacingAndGlyphs" stroke="#000" stroke-width="0.22" >Значение:</text>
<text x="323" y="470.5" font-size="11.5" fill="#000" textLength="67.5" lengthAdjust="spacingAndGlyphs" stroke="#000" stroke-width="0.22" >Переменное</text>
<text x="259" y="499" font-size="11.5" fill="#0066cc" textLength="139.5" lengthAdjust="spacingAndGlyphs" stroke="#0066cc" stroke-width="0.15" >Справка по этой функции</text>
<line x1="259" y1="501" x2="399" y2="501" stroke="#0066cc" stroke-width="1" />
<rect x="666" y="484.5" width="72" height="19.5" fill="#e1e1e1" stroke="#0078d7" stroke-width="2" />
<rect x="668.5" y="487" width="67" height="14.5" fill="none" stroke="#555" stroke-width="1" stroke-dasharray="1 1" opacity="0.5"/>
<text x="694.5" y="498" font-size="11.5" fill="#000" textLength="14.5" lengthAdjust="spacingAndGlyphs" stroke="#000" stroke-width="0.22" >OK</text>
<rect x="749.5" y="484" width="73" height="20.5" fill="#e1e1e1" stroke="#adadad" stroke-width="1" />
<text x="765.5" y="498" font-size="11.5" fill="#000" textLength="40" lengthAdjust="spacingAndGlyphs" stroke="#000" stroke-width="0.22" >Отмена</text>
<line x1="622" y1="495.3" x2="653" y2="495.3" stroke="#f21010" stroke-width="2.7" />
<path d="M664 495.300l-14-9 4 9-4 9z" fill="#f21010" />
<line x1="0" y1="0.5" x2="931" y2="0.5" stroke="#d9d3d3" stroke-width="1" />
<line x1="0.5" y1="0" x2="0.5" y2="625" stroke="#e2dede" stroke-width="1" />
<line x1="930.5" y1="0" x2="930.5" y2="625" stroke="#c9c9c9" stroke-width="1" />
<line x1="0" y1="624.5" x2="931" y2="624.5" stroke="#c2c2c2" stroke-width="1" />
</svg>
</body></html>
